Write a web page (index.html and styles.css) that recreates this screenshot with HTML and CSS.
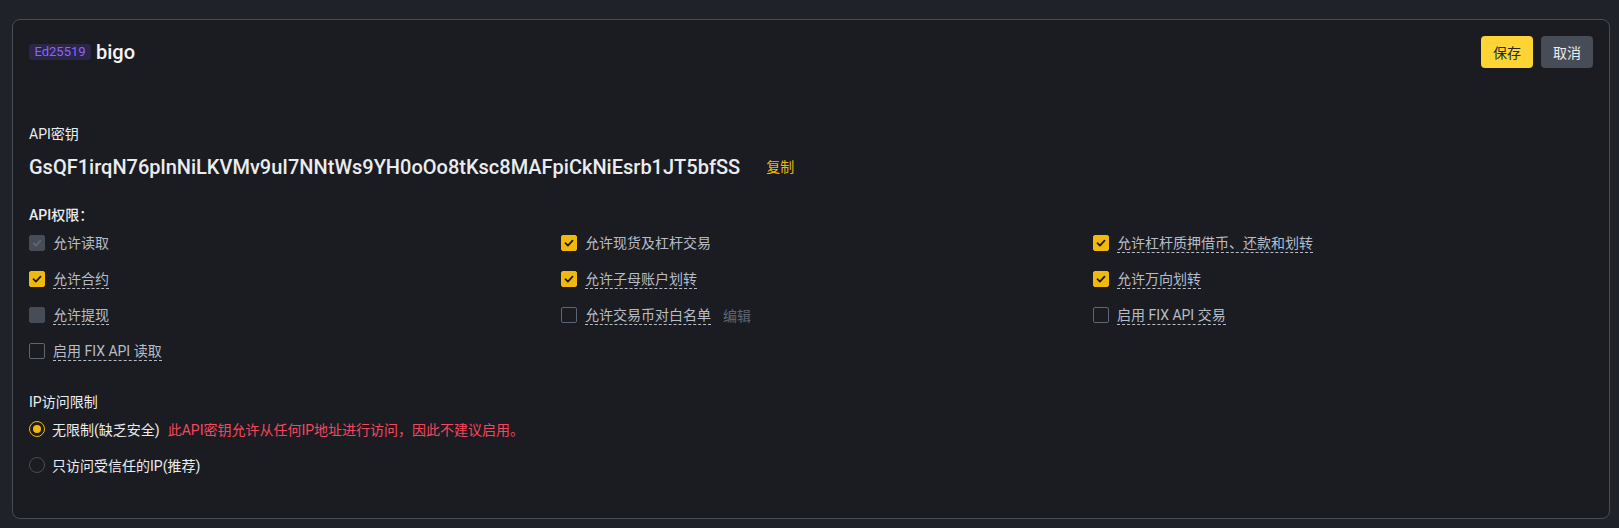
FILE: index.html
```html
<!DOCTYPE html>
<html lang="zh-CN">
<head>
<meta charset="utf-8">
<link rel="stylesheet" href="styles.css">
</head>
<body>
<div class="card">
  <div class="header">
    <div class="title">
      <span class="badge">Ed25519</span>
      <span class="name">bigo</span>
    </div>
    <div class="actions">
      <button class="btn btn-primary">保存</button>
      <button class="btn btn-secondary">取消</button>
    </div>
  </div>

  <div class="key-label">API密钥</div>
  <div class="key-row">
    <span class="key">GsQF1irqN76plnNiLKVMv9uI7NNtWs9YH0oOo8tKsc8MAFpiCkNiEsrb1JT5bfSS</span>
    <span class="copy">复制</span>
  </div>

  <div class="section-title">API权限：</div>
  <div class="perm-grid">
    <label class="perm"><span class="cb cb-disabled-checked"><svg viewBox="0 0 16 16"><path d="M4.5 8.2l2.4 2.4 4.6-5"/></svg></span><span class="txt">允许读取</span></label>
    <label class="perm"><span class="cb cb-checked"><svg viewBox="0 0 16 16"><path d="M4.5 8.2l2.4 2.4 4.6-5"/></svg></span><span class="txt">允许现货及杠杆交易</span></label>
    <label class="perm"><span class="cb cb-checked"><svg viewBox="0 0 16 16"><path d="M4.5 8.2l2.4 2.4 4.6-5"/></svg></span><span class="txt dashed">允许杠杆质押借币、还款和划转</span></label>

    <label class="perm"><span class="cb cb-checked"><svg viewBox="0 0 16 16"><path d="M4.5 8.2l2.4 2.4 4.6-5"/></svg></span><span class="txt dashed">允许合约</span></label>
    <label class="perm"><span class="cb cb-checked"><svg viewBox="0 0 16 16"><path d="M4.5 8.2l2.4 2.4 4.6-5"/></svg></span><span class="txt dashed">允许子母账户划转</span></label>
    <label class="perm"><span class="cb cb-checked"><svg viewBox="0 0 16 16"><path d="M4.5 8.2l2.4 2.4 4.6-5"/></svg></span><span class="txt dashed">允许万向划转</span></label>

    <label class="perm"><span class="cb cb-disabled"></span><span class="txt dashed">允许提现</span></label>
    <label class="perm"><span class="cb"></span><span class="txt dashed">允许交易币对白名单</span><span class="edit">编辑</span></label>
    <label class="perm"><span class="cb"></span><span class="txt dashed">启用 FIX API 交易</span></label>

    <label class="perm"><span class="cb"></span><span class="txt dashed">启用 FIX API 读取</span></label>
  </div>

  <div class="section-title ip-title">IP访问限制</div>
  <div class="radios">
    <label class="radio-row"><span class="radio radio-on"></span><span class="rtxt">无限制(缺乏安全)</span><span class="warn">此API密钥允许从任何IP地址进行访问，因此不建议启用。</span></label>
    <label class="radio-row"><span class="radio"></span><span class="rtxt">只访问受信任的IP(推荐)</span></label>
  </div>
</div>
</body>
</html>
```

FILE: styles.css
```css
* { box-sizing: border-box; }
html, body { margin: 0; }
body {
  background: #1f2229;
  padding: 19px 9px 9px 12px;
  font-family: Roboto, "Noto Sans CJK SC", sans-serif;
  color: #eaecef;
  font-size: 14px;
}
.card {
  background: #1b1c21;
  border: 1px solid #474d57;
  border-radius: 8px;
  padding: 16px 16px 40px;
  height: 500px;
}
.header {
  display: flex;
  align-items: center;
  justify-content: space-between;
  height: 32px;
}
.title { display: flex; align-items: center; gap: 5px; }
.badge {
  display: inline-flex;
  align-items: center;
  justify-content: center;
  height: 16px;
  width: 62px;
  border-radius: 3px;
  background: #2c2549;
  color: #8766f7;
  font-size: 13px;
  line-height: 16px;
}
.name { font-size: 20px; font-weight: 500; color: #f5f5f5; line-height: 24px; }
.actions { display: flex; gap: 8px; }
.btn {
  height: 32px;
  width: 52px;
  border: none;
  border-radius: 4px;
  font-family: Roboto, "Noto Sans CJK SC", sans-serif;
  font-size: 14px;
  padding: 0;
}
.btn-primary { background: #fcd535; color: #202630; }
.btn-secondary { background: #474d57; color: #eaecef; }

.key-label { margin-top: 56px; line-height: 20px; font-size: 14px; color: #eaecef; }
.key-row { margin-top: 11px; display: flex; align-items: center; line-height: 24px; }
.key { font-size: 20px; font-weight: 500; color: #eaecef; }
.copy { margin-left: 26px; color: #f0b90b; font-size: 14px; }

.section-title { margin-top: 26px; line-height: 20px; font-weight: 500; color: #eaecef; }
.perm-grid {
  margin-top: 8px;
  display: grid;
  grid-template-columns: 1fr 1fr 1fr;
  column-gap: 32px;
  row-gap: 16px;
}
.perm { display: flex; align-items: center; height: 20px; gap: 8px; }
.cb {
  width: 16px; height: 16px; flex: none;
  border: 1px solid #5e6673;
  border-radius: 2px;
  display: inline-flex;
}
.cb svg { width: 16px; height: 16px; margin: -1px; fill: none; stroke-width: 1.8; stroke-linecap: round; stroke-linejoin: round; }
.cb-checked { background: #f0b90b; border-color: #f0b90b; }
.cb-checked svg { stroke: #1b1c21; }
.cb-disabled-checked { background: #474d57; border-color: #474d57; }
.cb-disabled-checked svg { stroke: #5e6673; }
.cb-disabled { background: #474d57; border-color: #474d57; }
.txt { color: #b7bdc6; line-height: 18px; }
.dashed { border-bottom: 1px dashed #b7bdc6; }
.edit { color: #5e6673; margin-left: 4px; }

.ip-title { margin-top: 31px; font-weight: 400; }
.radios { margin-top: 7px; display: flex; flex-direction: column; gap: 16px; }
.radio-row { display: flex; align-items: center; height: 20px; }
.radio {
  width: 16px; height: 16px; flex: none;
  border: 1px solid #474d57;
  border-radius: 50%;
  margin-right: 7px;
  display: inline-flex; align-items: center; justify-content: center;
}
.radio-on { border: 1.5px solid #f0b90b; }
.radio-on::after { content: ""; width: 8px; height: 8px; border-radius: 50%; background: #f0b90b; }
.rtxt { color: #eaecef; }
.warn { color: #f6465d; margin-left: 8px; }
```
